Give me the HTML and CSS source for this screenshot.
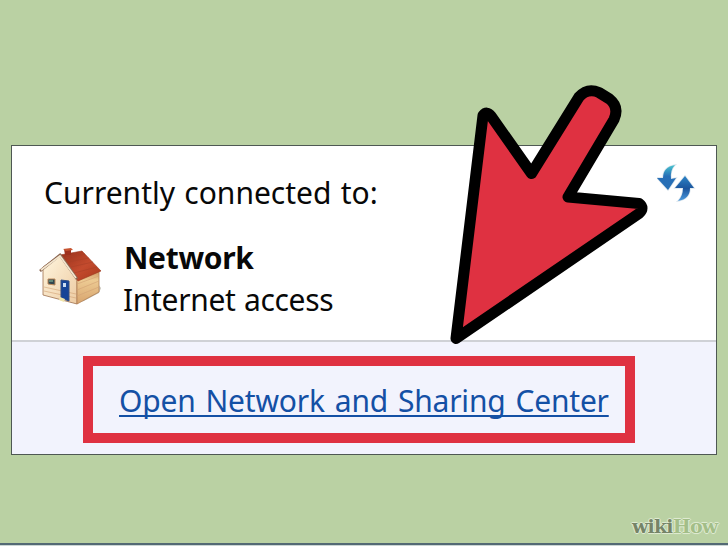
FILE: index.html
```html
<!DOCTYPE html>
<html lang="en">
<head>
<meta charset="utf-8">
<title>Network connection</title>
<link rel="stylesheet" href="styles.css">
</head>
<body>
<main class="panel">
  <section class="status">
    <div class="heading"><span>Currently connected to:</span>
      <svg class="refresh" width="40" height="40" viewBox="0 0 40 40" aria-hidden="true">
        <defs><linearGradient id="blue" x1="0" y1="0" x2="0" y2="1"><stop offset="0" stop-color="#48c5cf"/><stop offset=".45" stop-color="#286fb7"/><stop offset="1" stop-color="#2870b5"/></linearGradient>
        <linearGradient id="blueUp" x1="0" y1="0" x2="0" y2="1"><stop offset="0" stop-color="#2b83c6"/><stop offset=".5" stop-color="#1c559d"/><stop offset="1" stop-color="#4c9bdf"/></linearGradient></defs>
        <path d="M18 2Q6 4 6 15L0 15L11 27L19 15L14 16Q13 7 18 2Z" fill="url(#blue)" stroke="#dce6ed" stroke-width="1.500" paint-order="stroke"/>
        <path d="M28 13L37 25L33 25Q33 36 21 38Q26 33 26 25L18 25Z" fill="url(#blueUp)" stroke="#dce6ed" stroke-width="1.500" paint-order="stroke"/>
      </svg>
    </div>
    <div class="network">
      <svg class="house" width="66" height="60" viewBox="0 0 66 60" aria-hidden="true">
        <defs><linearGradient id="roof" x1="0" y1="0" x2="1" y2="1"><stop stop-color="#96301a"/><stop offset=".55" stop-color="#c44b2e"/><stop offset="1" stop-color="#a9371c"/></linearGradient>
        <linearGradient id="side" x1="0" y1="0" x2="0" y2="1"><stop stop-color="#c98e5b"/><stop offset=".3" stop-color="#edcb93"/><stop offset="1" stop-color="#d7a36d"/></linearGradient>
        <linearGradient id="front" x1="0" y1="0" x2="1" y2="1"><stop stop-color="#fff6df"/><stop offset="1" stop-color="#edcba2"/></linearGradient></defs>
        <path d="M43 55L60 46L62 41L59 37Z" fill="#c8c5b9"/>
        <path d="M4 20L21 8L38 31V57L4 48Z" fill="url(#front)" stroke="#9e704d" stroke-width=".8"/>
        <path d="M38 31L60 23V45L38 57Z" fill="url(#side)" stroke="#b18255" stroke-width=".8"/>
        <path d="M38 37L60 29M38 43L60 34M38 49L60 40M5 40L37 47M5 44L37 51" fill="none" stroke="#d2a174" stroke-width=".6"/>
        <path d="M21 8L43 4L62 24L39 34Z" fill="url(#roof)" stroke="#9a351c" stroke-width=".6"/>
        <path d="M26 11L46 7M29 15L50 11M32 20L54 15M35 26L58 20" stroke="#aa3f26" stroke-width=".6"/>
        <path d="M25 2L32 2V8L26 8Z" fill="#9e301d"/><path d="M24 2L32 1L34 3L27 4Z" fill="#c75431"/>
        <path d="M1 24L21 8L38 32" fill="none" stroke="#8c6751" stroke-width="2.8"/>
        <path d="M2 23L21 9L37 31" fill="none" stroke="#f3e6cf" stroke-width="1.7"/>
        <path d="M9 32H16V38L9 37Z" fill="#31464e" stroke="#bd8a5b"/><path d="M10 34H14" stroke="#6f9d89" stroke-width="1.5"/>
        <path d="M22 33L30 34V54L22 51Z" fill="#164497" stroke="#354f82"/><path d="M24 36H27V40H24Z" fill="#cbdcf1"/>
        <path d="M21 50L26 52L25 55L20 53Z" fill="#f0e4a9"/>
      </svg>
      <div class="details"><strong>Network</strong><span>Internet access</span></div>
    </div>
  </section>
  <footer class="actions"><div class="highlight"><a href="#">Open Network and Sharing Center</a></div></footer>
</main>
<svg class="pointer" width="220" height="290" viewBox="440 70 220 290" aria-hidden="true">
  <path d="M483 115.500Q487 110.500 491 116L531.500 173.500L579 97Q587.500 87.500 599 92.500L609.500 99Q619.500 107 614 119.500L568 197L639 203.500Q645 208 639 213.500L456 338.500Z" fill="#df3141" stroke="#000" stroke-width="11" stroke-linejoin="round"/>
</svg>
<div class="brand"><span>wiki</span><span class="how">How</span></div>
<div class="bottom-edge"></div>
</body>
</html>
```
FILE: styles.css
```css
* { box-sizing: border-box; }
body { margin: 0; width: 728px; height: 546px; padding: 145px 11px 0; position: relative; overflow: hidden; background: #bad1a3; font-family: "Noto Sans", sans-serif; font-size: 30px; color: #080808; }
.panel { width: 706px; height: 310px; border: 1px solid #4e5853; background: #fff; }
.status { height: 196px; padding: 20px 19px 0 26px; border-bottom: 2px solid #cfd1d6; }
.heading { height: 55px; display: flex; justify-content: space-between; line-height: 54px; padding-left: 6px; white-space: nowrap; }
.heading span { letter-spacing: 0; word-spacing: 1.5px; }
.refresh { flex: none; margin-top: -3px; }
.network { display: flex; gap: 20px; padding-top: 16px; }
.house { flex: none; margin: 10px 0 0 1px; }
.details { display: flex; flex-direction: column; line-height: 42px; white-space: nowrap; margin-left: -1px; }
.details strong { letter-spacing: -.3px; }
.details span { letter-spacing: -.33px; word-spacing: 1px; margin-left: -1px; }
.actions { height: 112px; padding: 14px 0 0 71px; background: #f2f3fd; }
.highlight { width: 552px; height: 87px; border: 10px solid #df3141; padding-left: 26px; line-height: 69px; white-space: nowrap; }
a { color: #1450a5; word-spacing: 2.5px; letter-spacing: -.22px; text-decoration-thickness: 1.5px; text-underline-offset: 3px; text-decoration-skip-ink: none; }
.pointer { position: absolute; left: 440px; top: 70px; }
.brand { position: absolute; left: 632px; top: 513px; font: bold 19px/26px "DejaVu Serif", serif; letter-spacing: -.8px; color: #758468; text-shadow: 0 0 2px #e4eed8, 1px 0 #dce8ce, -1px 0 #dce8ce, 0 1px #dce8ce, 0 -1px #dce8ce; }
.how { color: #a3be88; }
.bottom-edge { position: absolute; left: 0; bottom: 0; width: 100%; height: 3px; border-top: 2px solid #536974; background: #cbd5d4; }
```
